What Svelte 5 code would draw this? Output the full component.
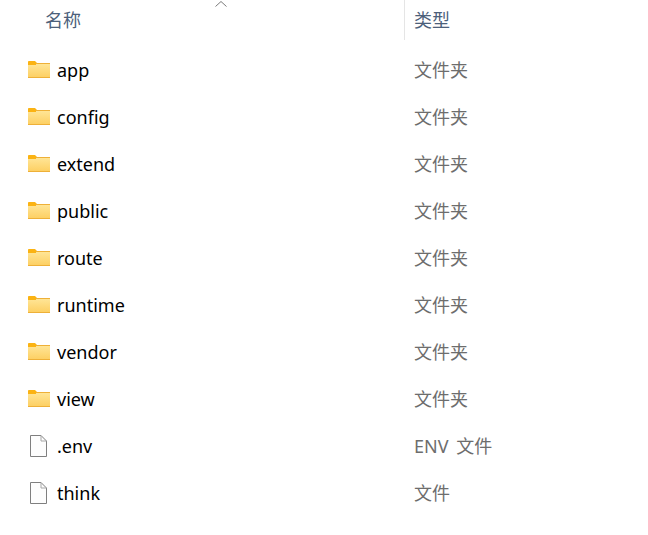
<script lang="ts">
    type Row = { name: string; type: string; kind: "folder" | "file" };

    const rows: Row[] = [
        { name: "app", type: "文件夹", kind: "folder" },
        { name: "config", type: "文件夹", kind: "folder" },
        { name: "extend", type: "文件夹", kind: "folder" },
        { name: "public", type: "文件夹", kind: "folder" },
        { name: "route", type: "文件夹", kind: "folder" },
        { name: "runtime", type: "文件夹", kind: "folder" },
        { name: "vendor", type: "文件夹", kind: "folder" },
        { name: "view", type: "文件夹", kind: "folder" },
        { name: ".env", type: "ENV 文件", kind: "file" },
        { name: "think", type: "文件", kind: "file" },
    ];
</script>

<div class="explorer">
    <div class="header">
        <div class="col-name">
            <span>名称</span>
            <svg class="sort" width="12" height="6" viewBox="0 0 12 6">
                <path d="M0.5 5.5 L6 0.5 L11.5 5.5" fill="none" stroke="#7a7a7a" stroke-width="1" />
            </svg>
        </div>
        <div class="col-type">类型</div>
    </div>

    <div class="list">
        {#each rows as row}
            <div class="row">
                <div class="cell-name">
                    {#if row.kind === "folder"}
                        <svg class="icon" width="22" height="17" viewBox="0 0 22 17">
                            <defs>
                                <linearGradient id="folderFill" x1="0" y1="0" x2="0" y2="1">
                                    <stop offset="0" stop-color="#ffe596" />
                                    <stop offset="1" stop-color="#fdd064" />
                                </linearGradient>
                            </defs>
                            <path d="M0 4 V0.8 Q0 0 0.8 0 H7 L9 2 V4 Z" fill="#fbb313" />
                            <rect x="0" y="2" width="22" height="15" fill="#eeb038" />
                            <rect x="0" y="3" width="22" height="13" fill="url(#folderFill)" />
                            <rect x="0" y="2" width="8" height="2" fill="#fbb313" />
                        </svg>
                    {:else}
                        <svg class="icon" width="22" height="23" viewBox="0 0 22 23">
                            <path d="M2.5 1.5 H13 L18.5 7 V22.5 H2.5 Z" fill="#fdfdfd" stroke="#7f7f7f" stroke-width="1" />
                            <path d="M13 1.5 V7 H18.5" fill="none" stroke="#a8a8a8" stroke-width="1" />
                        </svg>
                    {/if}
                    <span>{row.name}</span>
                </div>
                <div class="cell-type">{row.type}</div>
            </div>
        {/each}
    </div>
</div>

<style>
    :global(body) {
        background: #ffffff;
    }

    .explorer {
        width: 648px;
        height: 535px;
        overflow: hidden;
        font-family: "Noto Sans", "Noto Sans CJK SC", sans-serif;
        font-size: 18px;
    }

    .header {
        display: flex;
        height: 40px;
        color: #4c607a;
    }

    .col-name {
        position: relative;
        width: 405px;
        box-sizing: border-box;
        padding-left: 45px;
        line-height: 41px;
        border-right: 1px solid #e5e5e5;
    }

    .sort {
        position: absolute;
        left: 215px;
        top: 1px;
    }

    .col-type {
        padding-left: 9px;
        line-height: 41px;
    }

    .list {
        padding-top: 6px;
    }

    .row {
        display: flex;
        align-items: center;
        height: 47px;
    }

    .cell-name {
        display: flex;
        align-items: center;
        width: 414px;
        box-sizing: border-box;
        padding-left: 28px;
        color: #000000;
    }

    .icon {
        flex: none;
        margin-right: 7px;
    }

    .cell-type {
        color: #6d6d6d;
        padding-bottom: 2px;
        word-spacing: 3px;
    }
</style>
